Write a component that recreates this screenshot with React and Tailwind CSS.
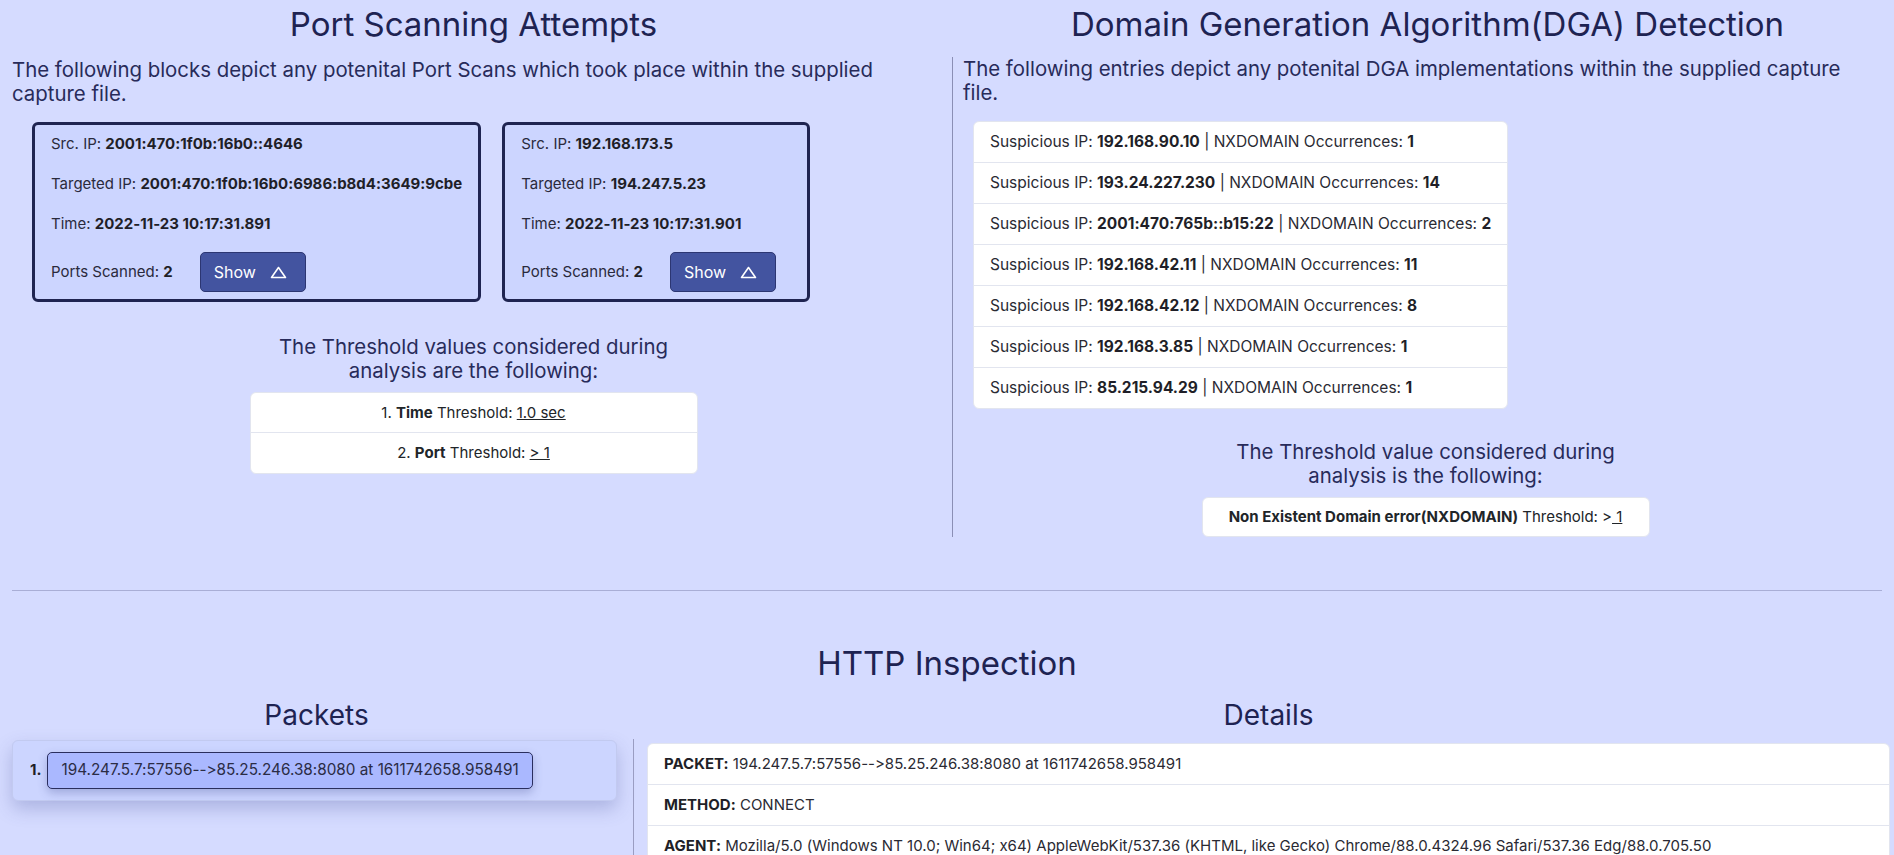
const scans = [
  {
    src: '2001:470:1f0b:16b0::4646',
    dst: '2001:470:1f0b:16b0:6986:b8d4:3649:9cbe',
    time: '2022-11-23 10:17:31.891',
    ports: 2,
  },
  {
    src: '192.168.173.5',
    dst: '194.247.5.23',
    time: '2022-11-23 10:17:31.901',
    ports: 2,
  },
]

const dga = [
  ['192.168.90.10', 1],
  ['193.24.227.230', 14],
  ['2001:470:765b::b15:22', 2],
  ['192.168.42.11', 11],
  ['192.168.42.12', 8],
  ['192.168.3.85', 1],
  ['85.215.94.29', 1],
]

const details = [
  ['PACKET', '194.247.5.7:57556-->85.25.246.38:8080 at 1611742658.958491'],
  ['METHOD', 'CONNECT'],
  [
    'AGENT',
    'Mozilla/5.0 (Windows NT 10.0; Win64; x64) AppleWebKit/537.36 (KHTML, like Gecko) Chrome/88.0.4324.96 Safari/537.36 Edg/88.0.705.50',
  ],
]

function TriangleUp() {
  return (
    <svg width="17" height="13" viewBox="0 0 17 13" fill="none">
      <path d="M1.5 11.5 L8.5 1.5 L15.5 11.5 Z" stroke="white" strokeWidth="1.6" strokeLinejoin="round" />
    </svg>
  )
}

function ScanCard({ scan }) {
  return (
    <div className="min-w-[308px] border-[3px] border-[#1f2451] rounded-[6px] bg-[#ccd5ff] px-[16px] py-[7px] text-[15px] text-[#2a2a3c]">
      <p className="leading-[24px] mb-[16px]">
        Src. IP: <b className="text-[#1f1f28]">{scan.src}</b>
      </p>
      <p className="leading-[24px] mb-[16px]">
        Targeted IP: <b className="text-[#1f1f28]">{scan.dst}</b>
      </p>
      <p className="leading-[24px] mb-[16px]">
        Time: <b className="text-[#1f1f28]">{scan.time}</b>
      </p>
      <div className="flex items-center h-[40px]">
        <span>
          Ports Scanned: <b className="text-[#1f1f28]">{scan.ports}</b>
        </span>
        <button className="ml-[27px] w-[106px] h-[40px] flex items-center gap-[14px] pl-[13px] bg-[#4354a0] border border-[#2c3672] rounded-[5px] text-white text-[16px]">
          Show
          <TriangleUp />
        </button>
      </div>
    </div>
  )
}

export default function App() {
  return (
    <div className="min-h-screen bg-[#d5dbff] font-['Inter',sans-serif] [font-feature-settings:'calt'_0] text-[#212529] pb-10">
      {/* Top: port scans + DGA */}
      <div className="grid grid-cols-2">
        <div>
          <h2 className="pt-[4px] text-center text-[33px] leading-[40px] text-[#1e2352]">Port Scanning Attempts</h2>
          <div className="px-[12px]">
            <p className="mt-[14px] text-[20.4px] leading-[24px] text-[#282b5a]">
              The following blocks depict any potenital Port Scans which took place within the supplied capture file.
            </p>
            <div className="mt-[16px] pl-[20px] flex items-start gap-[21px]">
              {scans.map((s) => (
                <ScanCard key={s.src} scan={s} />
              ))}
            </div>
            <p className="mt-[33px] w-[420px] mx-auto text-center text-[20.4px] leading-[24px] text-[#282b5a]">
              The Threshold values considered during analysis are the following:
            </p>
            <div className="mt-[9px] w-[448px] mx-auto bg-white rounded-[6px] border border-[#e2e5ef] text-[15px] text-center">
              <div className="h-[39px] leading-[39px]">
                1. <b>Time</b> Threshold: <u>1.0 sec</u>
              </div>
              <div className="h-[41px] leading-[40px] border-t border-[#e2e5ef]">
                2. <b>Port</b> Threshold: <u>&gt; 1</u>
              </div>
            </div>
          </div>
        </div>

        <div>
          <h2 className="pt-[4px] text-center text-[33px] leading-[40px] text-[#1e2352] pl-[14px]">
            Domain Generation Algorithm(DGA) Detection
          </h2>
          <div className="mt-[13px] ml-[5px] border-l border-[#8b8fb5] pl-[10px] pr-[6px]">
            <p className="max-w-[895px] text-[20.4px] leading-[24px] text-[#282b5a]">
              The following entries depict any potenital DGA implementations within the supplied capture file.
            </p>
            <div className="mt-[16px] ml-[10px] w-fit bg-white rounded-[6px] border border-[#e2e5ef] text-[15.5px] text-[#2a2a33]">
              {dga.map(([ip, n], i) => (
                <div
                  key={ip}
                  className={`px-[16px] leading-[24px] ${i === 0 ? 'py-[8px]' : 'pt-[8px] pb-[8px] border-t border-[#e2e5ef]'}`}
                >
                  Suspicious IP: <b className="text-[#1f1f28]">{ip}</b> | NXDOMAIN Occurrences:{' '}
                  <b className="text-[#1f1f28]">{n}</b>
                </div>
              ))}
            </div>
            <p className="mt-[31px] w-[420px] mx-auto text-center text-[20.4px] leading-[24px] text-[#282b5a]">
              The Threshold value considered during analysis is the following:
            </p>
            <div className="mt-[9px] w-[448px] h-[40px] mx-auto flex items-center justify-center bg-white rounded-[6px] border border-[#e2e5ef] text-[15px]">
              <b>Non Existent Domain error(NXDOMAIN)</b>
              <span className="ml-[4px]">
                Threshold: &gt;<u>&nbsp;1</u>
              </span>
            </div>
          </div>
        </div>
      </div>

      <hr className="mt-[53px] mx-[12px] border-0 border-t border-[#a9aed6]" />

      {/* HTTP inspection */}
      <h2 className="mt-[52px] text-center text-[33px] leading-[40px] text-[#1e2352]">HTTP Inspection</h2>
      <div className="mt-[15px] grid grid-cols-[633px_1fr]">
        <div className="pl-[12px] pr-[16px]">
          <h3 className="text-center text-[28px] leading-[34px] text-[#1e2352] -ml-[12px] -mr-[16px]">Packets</h3>
          <div className="mt-[8px] flex items-center gap-[6px] pl-[17px] py-[11px] bg-[#ccd5ff] border border-[#c2caf0] rounded-[6px] shadow-[0_8px_18px_rgba(70,80,150,0.28)]">
            <b className="text-[15px] text-[#1f1f28]">1.</b>
            <div className="h-[37px] flex items-center px-[13px] bg-[#aab8ff] border border-[#2a2e5e] rounded-[5px] text-[15.3px] text-[#2b2c45] shadow-[0_4px_10px_rgba(60,70,140,0.3)]">
              194.247.5.7:57556--&gt;85.25.246.38:8080 at 1611742658.958491
            </div>
          </div>
        </div>
        <div>
          <h3 className="pl-[14px] pr-[4px] text-center text-[28px] leading-[34px] text-[#1e2352]">Details</h3>
          <div className="mt-[7px] border-l border-[#9a9dc2] pl-[13px] pr-[4px] pt-[4px]">
            <div className="bg-white rounded-[6px] border border-[#e2e5ef] text-[15px] text-[#2a2a33]">
              {details.map(([k, v], i) => (
                <div
                  key={k}
                  className={`px-[16px] py-[8px] leading-[24px] ${i > 0 ? 'border-t border-[#e2e5ef]' : ''}`}
                >
                  <b className="text-[#1f1f28]">{k}:</b> {v}
                </div>
              ))}
            </div>
          </div>
        </div>
      </div>
    </div>
  )
}
